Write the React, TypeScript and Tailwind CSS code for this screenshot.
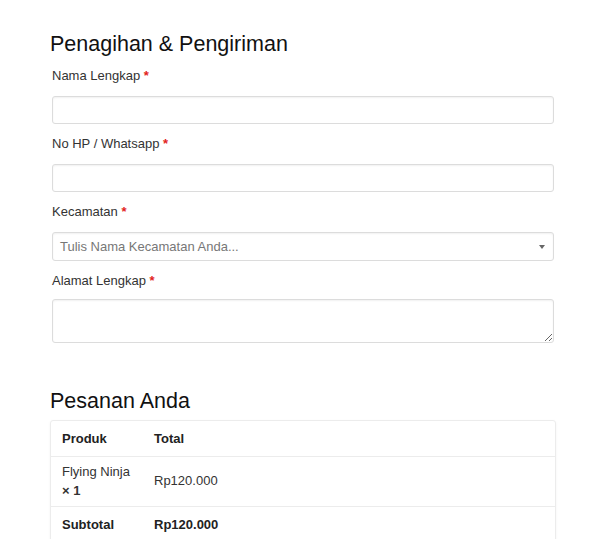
import React from 'react';

const Label: React.FC<{ text: string; mb?: string }> = ({ text, mb = 'mb-[10px]' }) => (
  <label className={`block h-5 leading-5 text-[13px] text-[#333] ${mb}`}>
    {text} <span className="text-[#e2231a] font-bold">*</span>
  </label>
);

const inputBase =
  'block w-full bg-white border border-[#dcdcdc] rounded-[3px] shadow-[inset_0_1px_2px_rgba(0,0,0,0.06)] outline-none';

const App: React.FC = () => {
  return (
    <div className="w-[600px] h-[539px] overflow-hidden bg-white font-['Liberation_Sans',Arial,sans-serif]">
      <div className="pl-[50px] pr-[46px] pt-[30px]">
        <h2 className="text-[21.5px] leading-7 text-[#111] mb-2">Penagihan &amp; Pengiriman</h2>

        <div className="pl-[2px]">
          <div className="mb-[10px]">
            <Label text="Nama Lengkap" />
            <input className={`${inputBase} h-7`} />
          </div>

          <div className="mb-[10px]">
            <Label text="No HP / Whatsapp" />
            <input className={`${inputBase} h-7`} />
          </div>

          <div className="mb-[10px]">
            <Label text="Kecamatan" />
            <div className={`${inputBase} h-[29px] flex items-center justify-between px-[7px]`}>
              <span className="text-[13px] text-[#777]">Tulis Nama Kecamatan Anda...</span>
              <span className="w-0 h-0 border-l-[3px] border-r-[3px] border-t-[4px] border-l-transparent border-r-transparent border-t-[#666] mr-[1px]"></span>
            </div>
          </div>

          <div>
            <Label text="Alamat Lengkap" mb="mb-[8px]" />
            <textarea className={`${inputBase} h-[44px] resize-y`} />
          </div>
        </div>

        <h2 className="text-[21.5px] leading-7 text-[#111] mt-[44px] mb-[5px]">Pesanan Anda</h2>

        <div className="border border-[#ececec] rounded-[3px] shadow-[0_1px_3px_rgba(0,0,0,0.05)] mr-[-2px]">
          <table className="w-full text-[13px] text-[#222] border-collapse">
            <tbody>
              <tr className="h-[35px] border-b border-[#ececec]">
                <th className="w-[92px] text-left font-bold pl-[11px]">Produk</th>
                <th className="text-left font-bold pl-[11px]">Total</th>
              </tr>
              <tr className="h-[50px] border-b border-[#ececec]">
                <td className="pl-[11px] leading-[19px] text-[#333]">
                  Flying Ninja
                  <br />
                  <span className="font-bold">× 1</span>
                </td>
                <td className="pl-[11px] text-[#333]">Rp120.000</td>
              </tr>
              <tr className="h-[36px]">
                <th className="text-left font-bold pl-[11px]">Subtotal</th>
                <th className="text-left font-bold pl-[11px]">Rp120.000</th>
              </tr>
            </tbody>
          </table>
        </div>
      </div>
    </div>
  );
};

export default App;
